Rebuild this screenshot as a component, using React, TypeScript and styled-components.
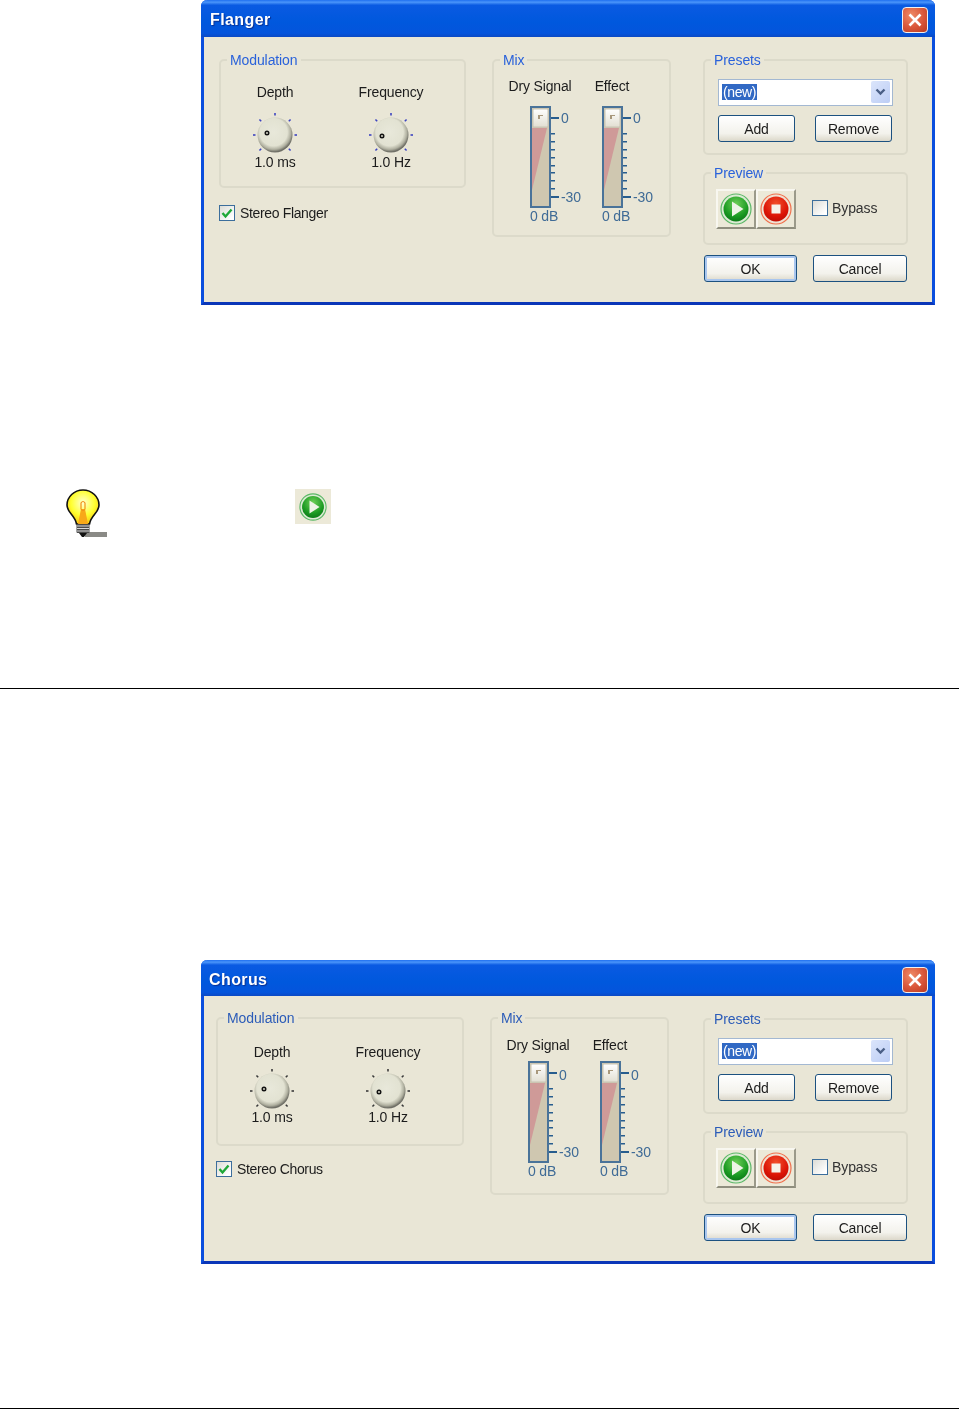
import React from 'react';
import styled, { createGlobalStyle } from 'styled-components';

const GlobalStyle = createGlobalStyle`
    html, body {
        margin: 0;
        padding: 0;
        background: #fff;
    }
`;

const Page = styled.div`
    width: 959px;
    height: 1409px;
    display: flex;
    flex-direction: column;
    overflow: hidden;
    font-family: "Liberation Sans", Arial, sans-serif;
    font-size: 14px;
    line-height: 16px;
    letter-spacing: -0.15px;
    color: #1c1c1c;
`;

const Window = styled.section<{ $compact?: boolean }>`
    width: 734px;
    height: ${p => (p.$compact ? 304 : 305)}px;
    margin-left: 201px;
    margin-top: ${p => (p.$compact ? 271 : 0)}px;
    flex: none;
    box-sizing: border-box;
    display: flex;
    flex-direction: column;
    border: solid #0a4ede;
    border-width: 0 3px 3px;
    border-bottom-color: #0a36b8;
    border-radius: 6px 6px 0 0;
    background: #e9e6d6;
    filter: blur(0.4px);
`;

const TitleBar = styled.header<{ $compact?: boolean }>`
    height: ${p => (p.$compact ? 36 : 37)}px;
    margin: 0 -3px;
    flex: none;
    box-sizing: border-box;
    display: flex;
    align-items: center;
    justify-content: space-between;
    padding: 3px 7px 0 ${p => (p.$compact ? 8 : 9)}px;
    border-radius: 6px 6px 0 0;
    background: linear-gradient(180deg, #1f6ff0 0%, #4a95fa 6%, #0a5ae2 14%, #0058dd 60%, #0454dc 90%, #0b49c4 100%);
`;

const TitleText = styled.h1`
    margin: 0;
    font-size: 16px;
    font-weight: 700;
    letter-spacing: 0.4px;
    color: #fff;
    text-shadow: 1px 1px 1px #0a2f90;
`;

const CloseButton = styled.button`
    width: 26px;
    height: 26px;
    padding: 0;
    display: flex;
    align-items: center;
    justify-content: center;
    border: 1px solid #f0f0f0;
    border-radius: 4px;
    background: radial-gradient(circle at 35% 30%, #ee8a66 0%, #d9563a 55%, #b83a20 100%);
`;

const Body = styled.div<{ $compact?: boolean }>`
    flex: 1;
    display: flex;
    align-items: flex-start;
    padding: ${p => (p.$compact ? '14px 0 0 12px' : '15px 0 0 15px')};
`;

const LeftColumn = styled.div<{ $compact?: boolean }>`
    width: ${p => (p.$compact ? 248 : 247)}px;
    flex: none;
`;

const MixColumn = styled.div<{ $compact?: boolean }>`
    width: 179px;
    flex: none;
    margin: 0 ${p => (p.$compact ? 34 : 32)}px 0 26px;
`;

const RightColumn = styled.div<{ $compact?: boolean }>`
    width: 205px;
    flex: none;
    margin-top: ${p => (p.$compact ? 1 : 0)}px;
`;

const Group = styled.fieldset<{ $height: number; $top?: number; $compact?: boolean }>`
    margin: ${p => p.$top ?? 0}px 0 0;
    padding: 0;
    min-width: 0;
    box-sizing: border-box;
    height: ${p => p.$height}px;
    border: 2px solid #dcdaca;
    border-radius: 5px;
    display: block;

    legend {
        margin-left: 6px;
        padding: 0 3px;
        font-size: 14px;
        line-height: 16px;
        letter-spacing: -0.1px;
        color: ${p => (p.$compact ? '#2c5cb8' : '#2a62da')};
    }
`;

const KnobRow = styled.div<{ $compact?: boolean }>`
    display: flex;
    gap: 36px;
    padding: ${p => (p.$compact ? 18 : 16)}px 0 0 14px;
`;

const KnobCell = styled.div<{ $compact?: boolean }>`
    width: 80px;
    display: flex;
    flex-direction: column;
    align-items: center;

    svg {
        margin: ${p => (p.$compact ? '9px 0 -4px' : '13px 0 -3px')};
    }
`;

const CheckRow = styled.label<{ $top: number }>`
    display: flex;
    align-items: center;
    gap: 5px;
    margin-top: ${p => p.$top}px;
    letter-spacing: -0.35px;
`;

const CheckBox = styled.span`
    width: 16px;
    height: 16px;
    flex: none;
    box-sizing: border-box;
    display: flex;
    align-items: center;
    justify-content: center;
    border: 1px solid #3c6e9c;
    background: linear-gradient(135deg, #dcdcd6 0%, #ffffff 85%);
`;

const SliderRow = styled.div<{ $compact?: boolean }>`
    display: flex;
    padding: ${p => (p.$compact ? 11 : 10)}px 0 0 10px;
`;

const SliderCell = styled.div<{ $compact?: boolean }>`
    width: 72px;
    display: flex;
    flex-direction: column;

    > span:first-child {
        text-align: center;
        margin-bottom: ${p => (p.$compact ? 8 : 12)}px;
    }
`;

const SliderBody = styled.div`
    display: flex;
    padding-left: 26px;
    height: 102px;

    svg {
        flex: none;
    }
`;

const Scale = styled.div<{ $compact?: boolean }>`
    flex: none;
    display: flex;
    flex-direction: column;
    justify-content: space-between;
    height: ${p => (p.$compact ? 93 : 95)}px;
    margin: ${p => (p.$compact ? 6 : 4)}px 0 0 2px;
    color: #3f6b96;
`;

const DbValue = styled.span`
    padding-left: 8px;
    text-align: center;
    color: #3f6b96;
`;

const ComboBox = styled.div`
    width: 175px;
    height: 27px;
    margin: 11px 0 0 13px;
    box-sizing: border-box;
    display: flex;
    align-items: center;
    justify-content: space-between;
    padding: 0 2px 1px 3px;
    border: 1px solid #a3b8d2;
    background: #fff;
`;

const SelectedText = styled.span`
    padding: 0 1px;
    background: #3169c4;
    color: #fff;
    letter-spacing: -0.4px;
`;

const ComboArrow = styled.span`
    width: 19px;
    height: 22px;
    display: flex;
    align-items: center;
    justify-content: center;
    border-radius: 2px;
    background: linear-gradient(135deg, #dbe5fb 0%, #bccdf5 100%);
`;

const ButtonRow = styled.div<{ $gap: number; $indent: number; $top: number }>`
    display: flex;
    gap: ${p => p.$gap}px;
    margin: ${p => p.$top}px 0 0 ${p => p.$indent}px;
`;

const PushButton = styled.button<{ $width: number; $isDefault?: boolean }>`
    width: ${p => p.$width}px;
    height: 27px;
    padding: 0;
    font: inherit;
    letter-spacing: inherit;
    color: #1c1c1c;
    border: 1px solid #1c5180;
    border-radius: 3px;
    background: linear-gradient(180deg, #ffffff 0%, #f3f2ec 70%, #dcd8ca 100%);
    box-shadow: ${p => (p.$isDefault ? 'inset 0 0 0 2px #a9c6ee' : 'none')};
`;

const PreviewRow = styled.div`
    display: flex;
    align-items: center;
    padding: 8px 0 0 11px;
`;

const TransportButton = styled.button`
    width: 40px;
    height: 40px;
    padding: 0;
    display: flex;
    align-items: center;
    justify-content: center;
    box-sizing: border-box;
    border: 2px solid;
    border-color: #f8f7f0 #9b9a8a #8f8e7e #f8f7f0;
    background: #ece9d8;
`;

const BypassCheck = styled(CheckRow)`
    margin: -2px 0 0 16px;
    gap: 4px;
    letter-spacing: -0.1px;
    color: #333;
`;

const TipRow = styled.div`
    flex: none;
    height: 49px;
    margin-top: 184px;
    padding-left: 66px;
    display: flex;
    align-items: flex-start;
    gap: 188px;
`;

const TipIconBox = styled.div`
    width: 36px;
    height: 35px;
    display: flex;
    align-items: center;
    justify-content: center;
    background: #ece9d8;
`;

const Rule = styled.hr<{ $top: number }>`
    flex: none;
    width: 100%;
    height: 1px;
    margin: ${p => p.$top}px 0 0;
    border: 0;
    background: #000;
`;

const Knob = ({ dotX, dotY, tick }: { dotX: number; dotY: number; tick: string }) => {
    const ticks = [180, 225, 270, 315, 0, 45, 135];
    const gradId = `knob${dotX}${tick.slice(1)}`;
    return (
        <svg width="44" height="44" viewBox="0 0 44 44">
            <defs>
                <radialGradient id={gradId} cx="46%" cy="42%" r="56%">
                    <stop offset="0%" stopColor="#e8e8da" />
                    <stop offset="70%" stopColor="#e2e2d2" />
                    <stop offset="88%" stopColor="#b0b0a0" />
                    <stop offset="100%" stopColor="#6f6f66" />
                </radialGradient>
            </defs>
            {ticks.map(a => {
                const r = (a * Math.PI) / 180;
                return (
                    <line
                        key={a}
                        x1={22 + 19.5 * Math.cos(r)}
                        y1={22 + 19.5 * Math.sin(r)}
                        x2={22 + 22 * Math.cos(r)}
                        y2={22 + 22 * Math.sin(r)}
                        stroke={tick}
                        strokeWidth="1.6"
                    />
                );
            })}
            <circle cx="22" cy="22" r="17.5" fill={`url(#${gradId})`} />
            <circle cx={dotX} cy={dotY} r="1.8" fill="#c8c8ba" stroke="#111" strokeWidth="1.4" />
        </svg>
    );
};

const SliderTrack = ({ id }: { id: string }) => {
    const shortTicks = [27, 35, 43, 51, 59, 66, 74, 82];
    return (
        <svg width="29" height="102" viewBox="0 0 29 102">
            <defs>
                <linearGradient id={id} x1="0" y1="0" x2="0" y2="1">
                    <stop offset="0%" stopColor="#ffffff" />
                    <stop offset="100%" stopColor="#e2dfd2" />
                </linearGradient>
            </defs>
            <rect x="1" y="1" width="19" height="100" fill="#cfc7b0" stroke="#4a7399" strokeWidth="2" />
            <polygon points="2,22 17,22 2,84" fill="#cf9a98" />
            <rect x="3" y="3" width="15" height="18" rx="1" fill={`url(#${id})`} stroke="#c8c4b4" />
            <polygon points="8,9 13,9 13,10 10,10 10,13 8,13" fill="#a8987c" />
            <rect x="21" y="11" width="8" height="2" fill="#275d8e" />
            <rect x="21" y="90" width="8" height="2" fill="#275d8e" />
            {shortTicks.map(y => (
                <rect key={y} x="21" y={y} width="4" height="1.5" fill="#275d8e" />
            ))}
        </svg>
    );
};

const PlayIcon = ({ id, size = 32 }: { id: string; size?: number }) => (
    <svg width={size} height={size} viewBox="0 0 32 32">
        <defs>
            <radialGradient id={id} cx="50%" cy="30%" r="75%">
                <stop offset="0%" stopColor="#6fcf58" />
                <stop offset="65%" stopColor="#1a9a22" />
                <stop offset="100%" stopColor="#0a7416" />
            </radialGradient>
        </defs>
        <circle cx="16" cy="16" r="15" fill="#dcebd4" stroke="#5cb868" strokeWidth="1.2" />
        <circle cx="16" cy="16" r="12.5" fill={`url(#${id})`} />
        <polygon points="12,8.5 23.5,16 12,23.5" fill="#eef4e6" />
    </svg>
);

const StopIcon = () => (
    <svg width="32" height="32" viewBox="0 0 32 32">
        <defs>
            <radialGradient id="stopFill" cx="50%" cy="30%" r="75%">
                <stop offset="0%" stopColor="#f2502c" />
                <stop offset="65%" stopColor="#dc1406" />
                <stop offset="100%" stopColor="#b80c04" />
            </radialGradient>
        </defs>
        <circle cx="16" cy="16" r="15" fill="#f0e2d4" stroke="#f0704c" strokeWidth="1.2" />
        <circle cx="16" cy="16" r="12.5" fill="url(#stopFill)" />
        <rect x="11.5" y="11.5" width="9" height="9" fill="#f6f2ea" />
    </svg>
);

const BulbIcon = () => (
    <svg width="41" height="49" viewBox="0 0 41 49">
        <defs>
            <radialGradient id="bulbFill" cx="50%" cy="38%" r="62%">
                <stop offset="0%" stopColor="#ffffd0" />
                <stop offset="60%" stopColor="#ffff30" />
                <stop offset="100%" stopColor="#f8c810" />
            </radialGradient>
        </defs>
        <rect x="19" y="43" width="22" height="5" fill="#8a8a86" />
        <path
            d="M17 1 C8 1 1 8 1 16 C1 24 9 26 10.5 35 L23.5 35 C25 26 33 24 33 16 C33 8 26 1 17 1 Z"
            fill="url(#bulbFill)"
            stroke="#111"
            strokeWidth="1.6"
        />
        <path d="M12 35 L15 20 L19 20 L22 35 Z" fill="#f8a818" />
        <path d="M15 14 L15 20 Q17 23 19 20 L19 14 Q17 11 15 14 Z" fill="none" stroke="#f09018" strokeWidth="1.2" />
        <rect x="10.5" y="35" width="13" height="9" rx="1" fill="#4a4a4a" />
        <path d="M11 37 H23 M11 39.5 H23 M11 42 H23" stroke="#d8d8d8" strokeWidth="1" />
        <path d="M13 44 H21 L18 48 H16 Z" fill="#111" />
    </svg>
);

const Chevron = () => (
    <svg width="11" height="9" viewBox="0 0 11 9">
        <path d="M1.5 1.5 L5.5 5.5 L9.5 1.5" fill="none" stroke="#4a5f86" strokeWidth="2.4" />
    </svg>
);

const Check = () => (
    <svg width="12" height="12" viewBox="0 0 12 12">
        <path d="M1.5 6 L4.5 9.5 L10.5 2.5" fill="none" stroke="#1fa838" strokeWidth="2.4" />
    </svg>
);

const EffectDialog = ({ title, stereoLabel, compact, idPrefix }: { title: string; stereoLabel: string; compact?: boolean; idPrefix: string }) => {
    const tick = compact ? '#3a3a3a' : '#3c44c0';
    return (
        <Window $compact={compact}>
            <TitleBar $compact={compact}>
                <TitleText>{title}</TitleText>
                <CloseButton aria-label="Close">
                    <svg width="16" height="16" viewBox="0 0 16 16">
                        <path d="M2.5 2.5 L13.5 13.5 M13.5 2.5 L2.5 13.5" stroke="#fff" strokeWidth="2.6" />
                    </svg>
                </CloseButton>
            </TitleBar>
            <Body $compact={compact}>
                <LeftColumn $compact={compact}>
                    <Group $height={136} $compact={compact}>
                        <legend>Modulation</legend>
                        <KnobRow $compact={compact}>
                            <KnobCell $compact={compact}>
                                <span>Depth</span>
                                <Knob dotX={14} dotY={20} tick={tick} />
                                <span>1.0 ms</span>
                            </KnobCell>
                            <KnobCell $compact={compact}>
                                <span>Frequency</span>
                                <Knob dotX={13} dotY={23} tick={tick} />
                                <span>1.0 Hz</span>
                            </KnobCell>
                        </KnobRow>
                    </Group>
                    <CheckRow $top={compact ? 15 : 17}>
                        <CheckBox><Check /></CheckBox>
                        <span>{stereoLabel}</span>
                    </CheckRow>
                </LeftColumn>
                <MixColumn $compact={compact}>
                    <Group $height={185} $compact={compact}>
                        <legend>Mix</legend>
                        <SliderRow $compact={compact}>
                            <SliderCell $compact={compact}>
                                <span>Dry Signal</span>
                                <SliderBody>
                                    <SliderTrack id={`${idPrefix}dry`} />
                                    <Scale $compact={compact}><span>0</span><span>-30</span></Scale>
                                </SliderBody>
                                <DbValue>0 dB</DbValue>
                            </SliderCell>
                            <SliderCell $compact={compact}>
                                <span>Effect</span>
                                <SliderBody>
                                    <SliderTrack id={`${idPrefix}fx`} />
                                    <Scale $compact={compact}><span>0</span><span>-30</span></Scale>
                                </SliderBody>
                                <DbValue>0 dB</DbValue>
                            </SliderCell>
                        </SliderRow>
                    </Group>
                </MixColumn>
                <RightColumn $compact={compact}>
                    <Group $height={103} $compact={compact}>
                        <legend>Presets</legend>
                        <ComboBox>
                            <SelectedText>(new)</SelectedText>
                            <ComboArrow><Chevron /></ComboArrow>
                        </ComboBox>
                        <ButtonRow $gap={20} $indent={13} $top={9}>
                            <PushButton $width={77}>Add</PushButton>
                            <PushButton $width={77}>Remove</PushButton>
                        </ButtonRow>
                    </Group>
                    <Group $height={80} $top={10} $compact={compact}>
                        <legend>Preview</legend>
                        <PreviewRow>
                            <TransportButton aria-label="Play"><PlayIcon id={`${idPrefix}play`} /></TransportButton>
                            <TransportButton aria-label="Stop"><StopIcon /></TransportButton>
                            <BypassCheck $top={0}>
                                <CheckBox />
                                <span>Bypass</span>
                            </BypassCheck>
                        </PreviewRow>
                    </Group>
                    <ButtonRow $gap={16} $indent={1} $top={10}>
                        <PushButton $width={93} $isDefault>OK</PushButton>
                        <PushButton $width={94}>Cancel</PushButton>
                    </ButtonRow>
                </RightColumn>
            </Body>
        </Window>
    );
};

const App = () => (
    <Page>
        <GlobalStyle />
        <EffectDialog title="Flanger" stereoLabel="Stereo Flanger" idPrefix="fl" />
        <TipRow>
            <BulbIcon />
            <TipIconBox><PlayIcon id="tipPlay" size={28} /></TipIconBox>
        </TipRow>
        <Rule $top={150} />
        <EffectDialog title="Chorus" stereoLabel="Stereo Chorus" idPrefix="ch" compact />
        <Rule $top={144} />
    </Page>
);

export default App;
